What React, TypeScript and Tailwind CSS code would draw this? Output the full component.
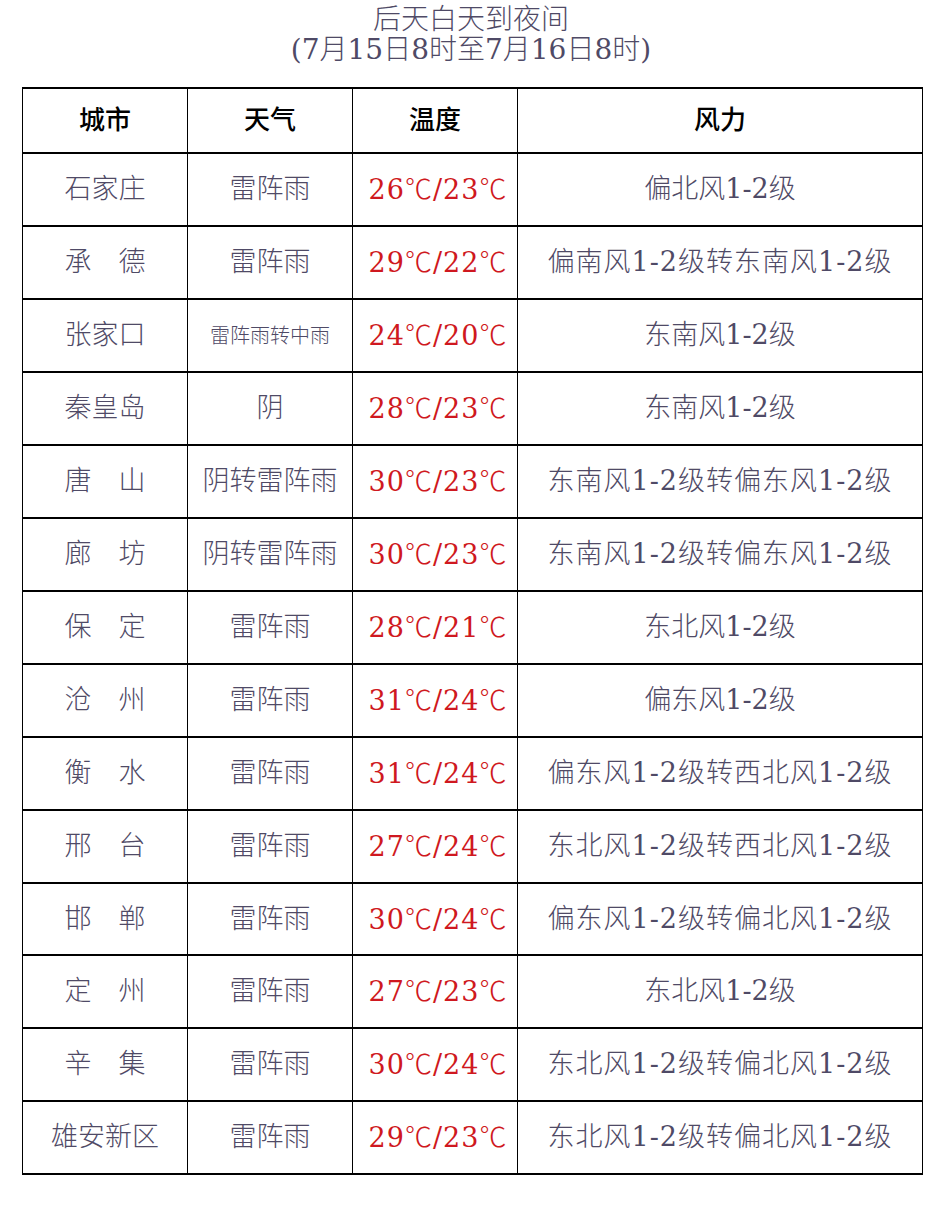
const rows: [string, string, string, string][] = [
  ["石家庄", "雷阵雨", "26/23", "偏北风1-2级"],
  ["承　德", "雷阵雨", "29/22", "偏南风1-2级转东南风1-2级"],
  ["张家口", "雷阵雨转中雨", "24/20", "东南风1-2级"],
  ["秦皇岛", "阴", "28/23", "东南风1-2级"],
  ["唐　山", "阴转雷阵雨", "30/23", "东南风1-2级转偏东风1-2级"],
  ["廊　坊", "阴转雷阵雨", "30/23", "东南风1-2级转偏东风1-2级"],
  ["保　定", "雷阵雨", "28/21", "东北风1-2级"],
  ["沧　州", "雷阵雨", "31/24", "偏东风1-2级"],
  ["衡　水", "雷阵雨", "31/24", "偏东风1-2级转西北风1-2级"],
  ["邢　台", "雷阵雨", "27/24", "东北风1-2级转西北风1-2级"],
  ["邯　郸", "雷阵雨", "30/24", "偏东风1-2级转偏北风1-2级"],
  ["定　州", "雷阵雨", "27/23", "东北风1-2级"],
  ["辛　集", "雷阵雨", "30/24", "东北风1-2级转偏北风1-2级"],
  ["雄安新区", "雷阵雨", "29/23", "东北风1-2级转偏北风1-2级"],
];

const cell = "border-x border-y-2 border-black";

function Temp({ value }: { value: string }) {
  const [hi, lo] = value.split("/");
  return (
    <span className="pl-[6px] text-[#cf1820] tracking-[1px]">
      {hi}
      <span className="font-['Noto_Sans_CJK_SC'] font-light">℃</span>/{lo}
      <span className="font-['Noto_Sans_CJK_SC'] font-light">℃</span>
    </span>
  );
}

export default function App() {
  return (
    <div className="w-[942px] h-[1218px] bg-white font-['DejaVu_Serif','Noto_Sans_CJK_SC',serif] text-[#4f4a66]">
      {/* 标题 */}
      <div className="pt-[5px] text-center text-[28px] leading-[30px] font-light">
        <div>后天白天到夜间</div>
        <div>(7月15日8时至7月16日8时)</div>
      </div>

      <table className="mt-[22px] ml-[22px] w-[901px] border-collapse table-fixed text-center">
        <colgroup>
          <col className="w-[165px]" />
          <col className="w-[165px]" />
          <col className="w-[165px]" />
          <col />
        </colgroup>
        <thead>
          <tr className="h-[65px] text-black text-[26px]">
            <th className={cell + " font-medium"}>城市</th>
            <th className={cell + " font-medium"}>天气</th>
            <th className={cell + " font-medium"}>温度</th>
            <th className={cell + " font-medium"}>风力</th>
          </tr>
        </thead>
        <tbody>
          {rows.map(([city, weather, temp, wind], i) => (
            <tr
              key={city}
              className={i === 10 ? "h-[72px] text-[27px] font-light" : "h-[73px] text-[27px] font-light"}
            >
              <td className={cell}>{city}</td>
              <td className={weather.length > 5 ? cell + " text-[20px]" : cell}>{weather}</td>
              <td className={cell}>
                <Temp value={temp} />
              </td>
              <td className={wind.length > 10 ? cell + " tracking-[1px]" : cell}>{wind}</td>
            </tr>
          ))}
        </tbody>
      </table>
    </div>
  );
}
